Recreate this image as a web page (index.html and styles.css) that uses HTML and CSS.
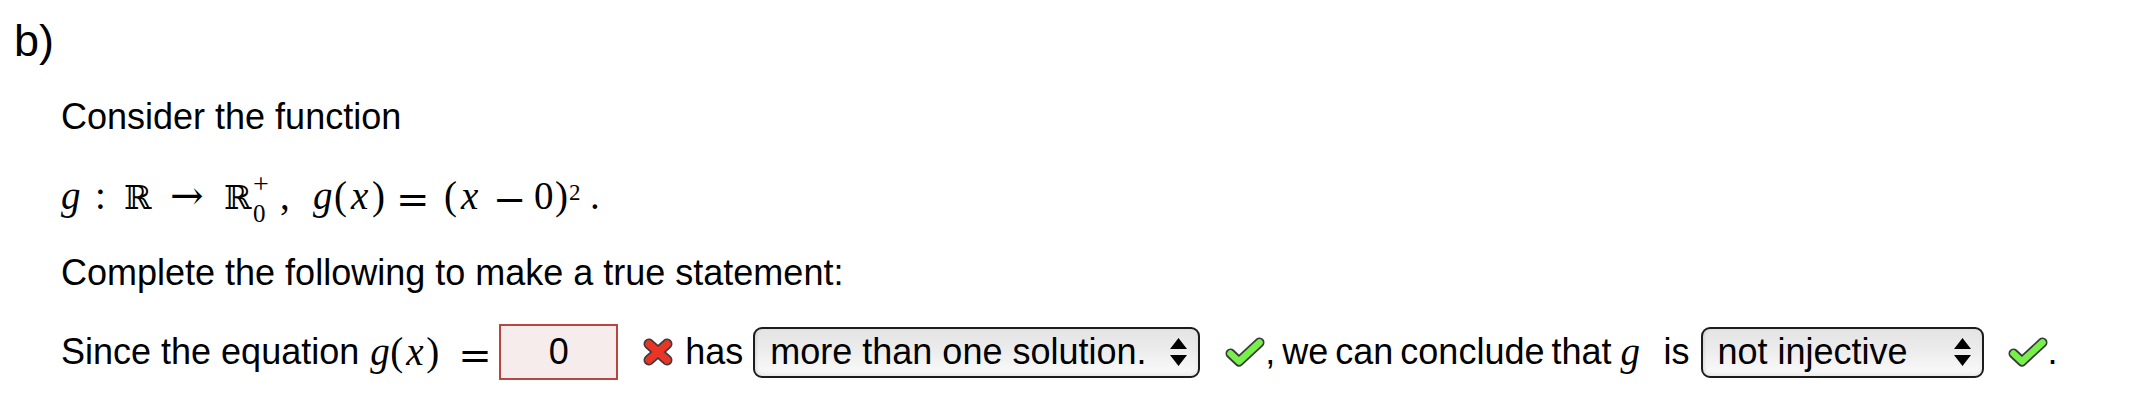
FILE: index.html
```html
<!DOCTYPE html>
<html>
<head>
<meta charset="utf-8">
<link rel="stylesheet" href="styles.css">
</head>
<body>
<div class="label">b)</div>
<div class="content">
  <p class="line p1">Consider the function</p>
  <div class="math-line"><span class="a w34 mi">g</span><span class="a w29 colon">:</span><span class="a w46 bb">ℝ</span><span class="a w54 arrow">→</span><span class="a w29 bb">ℝ</span><span class="a w27 supsub"><span class="sup">+</span><span class="sub">0</span></span><span class="a w33">,</span><span class="a w21 mi">g</span><span class="a w17">(</span><span class="a w21 mi">x</span><span class="a w24">)</span><span class="a w48 eq">=</span><span class="a w17">(</span><span class="a w32 mi">x</span><span class="a w41 minus">−</span><span class="a w21">0</span><span class="a w14">)</span><span class="a w21 pow">2</span><span class="a">.</span></div>
  <p class="line p3">Complete the following to make a true statement:</p>
  <div class="row">
    <span class="txt">Since the equation </span>
    <span class="math-inline first"><span class="a w20 mi">g</span><span class="a w16">(</span><span class="a w20 mi">x</span><span class="a w32">)</span><span class="a w41 eq">=</span></span>
    <span class="answer">0</span>
    <svg class="icon-x" width="30" height="28" viewBox="0 0 30 28"><g stroke-linecap="round" fill="none"><path d="M6 6 L24 22 M24 6 L6 22" stroke="#3c3c3c" stroke-width="11"/><path d="M6 6 L24 22 M24 6 L6 22" stroke="#ea3526" stroke-width="7.5"/></g></svg>
    <span class="txt has">has </span>
    <div class="select sel1"><span class="sel-text">more than one solution.</span><svg class="arrows" width="17" height="28" viewBox="0 0 17 28"><path d="M8.5 0 L17 11 L0 11 Z M0 17 L17 17 L8.5 28 Z" fill="#000"/></svg></div>
    <svg class="icon-check" width="40" height="30" viewBox="0 0 40 30"><g stroke-linecap="round" stroke-linejoin="round" fill="none"><path d="M5.5 16.5 L14 24.5 L34.5 5.5" stroke="#3a3a3a" stroke-width="10"/><path d="M5.5 16.5 L14 24.5 L34.5 5.5" stroke="#78f04c" stroke-width="6.5"/></g></svg>
    <span class="txt tight">, we can conclude that </span>
    <span class="math-inline second"><span class="a w43 mi">g</span></span>
    <span class="txt">is </span>
    <div class="select sel2"><span class="sel-text">not injective</span><svg class="arrows" width="17" height="28" viewBox="0 0 17 28"><path d="M8.5 0 L17 11 L0 11 Z M0 17 L17 17 L8.5 28 Z" fill="#000"/></svg></div>
    <svg class="icon-check check2" width="40" height="30" viewBox="0 0 40 30"><g stroke-linecap="round" stroke-linejoin="round" fill="none"><path d="M5.5 16.5 L14 24.5 L34.5 5.5" stroke="#3a3a3a" stroke-width="10"/><path d="M5.5 16.5 L14 24.5 L34.5 5.5" stroke="#78f04c" stroke-width="6.5"/></g></svg>
    <span class="txt">.</span>
  </div>
</div>
</body>
</html>
```

FILE: styles.css
```css
html, body {
  margin: 0;
  padding: 0;
  background: #ffffff;
  color: #000000;
  font-family: "Liberation Sans", Arial, Helvetica, sans-serif;
}

.label {
  font-size: 45px;
  line-height: 52px;
  height: 52px;
  padding: 15px 0 0 14px;
}

.content {
  padding-left: 61px;
}

.line {
  margin: 0;
  font-size: 36px;
  line-height: 40px;
  height: 40px;
  white-space: nowrap;
}

.p1 { margin-top: 30px; }
.p3 { margin-top: 37px; }

/* math */
.math-line {
  margin-top: 39px;
  height: 40px;
  line-height: 40px;
  font-family: "Liberation Serif", "Times New Roman", serif;
  font-size: 39px;
  white-space: nowrap;
}

.a { display: inline-block; }
.w14 { width: 14px; }
.w16 { width: 16px; }
.w17 { width: 17px; }
.w20 { width: 20px; }
.w21 { width: 21px; }
.w24 { width: 24px; }
.w27 { width: 27px; }
.w29 { width: 29px; }
.w32 { width: 32px; }
.w33 { width: 33px; }
.w34 { width: 34px; }
.w41 { width: 41px; }
.w43 { width: 43px; }
.w46 { width: 46px; }
.w48 { width: 48px; }
.w54 { width: 54px; }

.mi { font-style: italic; }

.bb {
  font-family: "DejaVu Serif", "DejaVu Sans", serif;
  font-size: 33px;
  line-height: 30px;
}

.arrow {
  font-family: "DejaVu Serif", "DejaVu Sans", serif;
  font-size: 40px;
  line-height: 30px;
}

.supsub {
  display: inline-flex;
  flex-direction: column;
  vertical-align: 16px;
  line-height: 14px;
}
.sup { font-size: 28px; line-height: 14px; }
.sub { font-size: 25px; line-height: 46px; }

.eq {
  font-family: "DejaVu Serif", "DejaVu Sans", serif;
  font-size: 40px;
  line-height: 30px;
  vertical-align: -4px;
}

.minus {
  font-family: "DejaVu Serif", "DejaVu Sans", serif;
  font-size: 40px;
  line-height: 30px;
  vertical-align: -4px;
}

.pow {
  font-size: 23px;
  line-height: 20px;
  vertical-align: 9px;
}

/* statement row */
.row {
  margin-top: 31px;
  display: flex;
  align-items: center;
  height: 56px;
  font-size: 36px;
  white-space: pre;
}

.txt { line-height: 40px; }
.tight { word-spacing: -3px; }

.math-inline {
  font-family: "Liberation Serif", "Times New Roman", serif;
  font-size: 39px;
  line-height: 40px;
  white-space: nowrap;
}
.math-inline.first { margin-left: 1px; }
.math-inline.second { margin-left: 2px; }

.answer {
  box-sizing: border-box;
  width: 119px;
  height: 56px;
  border: 2px solid #b6463f;
  background: #f6ecec;
  text-align: center;
  line-height: 52px;
}

.icon-x { margin-left: 25px; }
.has { margin-left: 12px; }

.select {
  box-sizing: border-box;
  height: 51px;
  border: 2px solid #1c1c1c;
  border-radius: 9px;
  background: linear-gradient(to bottom, #e4e4e4 0%, #ececec 45%, #f6f6f6 80%, #fbfbfb 100%);
  box-shadow: inset 0 -3px 4px rgba(0, 0, 0, 0.06), inset 2px 0 3px rgba(0, 0, 0, 0.05);
  display: flex;
  align-items: center;
  justify-content: space-between;
  padding: 0 11px 0 15px;
}
.sel-text { line-height: 40px; }
.sel1 { width: 447px; }
.sel2 { width: 283px; margin-left: 1px; }

.icon-check { margin-left: 25px; }
.check2 { margin-left: 24px; }
```
